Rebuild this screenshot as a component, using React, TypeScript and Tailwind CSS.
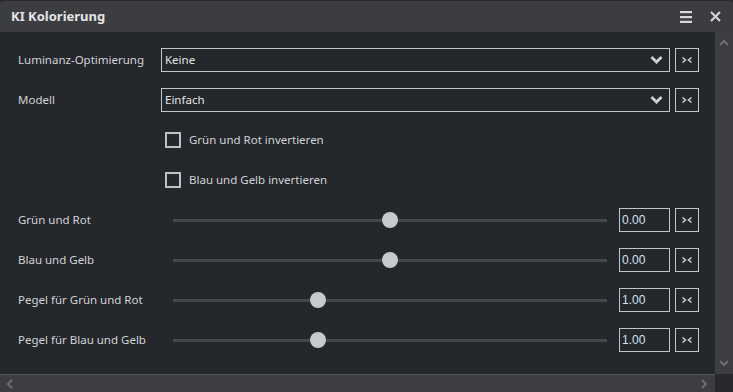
import { useState } from "react";

const font = { fontFamily: '"Noto Sans", "Open Sans", sans-serif' };

function ResetButton() {
  return (
    <button className="flex h-6 w-6 shrink-0 items-center justify-center border border-[#c3c4c6] bg-transparent">
      <svg width="12" height="8" viewBox="0 0 12 8" fill="none" stroke="#c8c9cb" strokeWidth="1.6">
        <path d="M1.5 1.5 L4.5 4 L1.5 6.5" />
        <path d="M10.5 1.5 L7.5 4 L10.5 6.5" />
      </svg>
    </button>
  );
}

function Row({ label, children }: { label: string; children: React.ReactNode }) {
  return (
    <div className="flex h-10 items-center">
      <div className="w-[143px] shrink-0 text-[11.5px] text-[#d2d3d5]">{label}</div>
      <div className="flex flex-1 items-center">{children}</div>
    </div>
  );
}

function Select({ value }: { value: string }) {
  return (
    <>
      <div className="flex h-6 flex-1 items-center justify-between border border-[#c3c4c6] pl-[3px] pr-[6px] text-[11.5px] text-[#e2e3e5]">
        <span>{value}</span>
        <svg width="13" height="9" viewBox="0 0 13 9" fill="#d0d1d3">
          <path d="M0.5 2 L2.5 0 L6.5 4 L10.5 0 L12.5 2 L6.5 8 Z" />
        </svg>
      </div>
      <div className="w-[5px]" />
      <ResetButton />
    </>
  );
}

function Check({ label }: { label: string }) {
  const [on, setOn] = useState(false);
  return (
    <div className="flex items-center pl-1" onClick={() => setOn(!on)}>
      <div className="h-4 w-4 border-2 border-[#bfc0c2]" />
      <span className="ml-2 text-[11.5px] text-[#d2d3d5]">{label}</span>
    </div>
  );
}

function Slider({ value, pos }: { value: string; pos: number }) {
  return (
    <>
      <div className="relative ml-3 mr-3 h-4 flex-1">
        <div className="absolute left-0 right-0 top-[7px] h-[3px] bg-[#45474b]" />
        <div
          className="absolute top-0 h-4 w-4 -translate-x-1/2 rounded-full bg-[#c8c9cc]"
          style={{ left: `${pos}%` }}
        />
      </div>
      <div
        className="flex h-6 w-[51px] shrink-0 items-center border border-[#c3c4c6] pl-[2px] text-[12px] text-[#d6e0ea]"
        style={{ fontFamily: '"Liberation Sans", Arial, sans-serif' }}
      >
        {value}
      </div>
      <div className="w-[5px]" />
      <ResetButton />
    </>
  );
}

export default function App() {
  return (
    <div className="flex h-[392px] w-[733px] flex-col overflow-hidden bg-[#24272c]" style={font}>
      <div className="flex h-8 shrink-0 items-center justify-between rounded-t-[3px] border-t border-[#2a2b2e] bg-[#3c3d41] pl-[11px] pr-[12px]">
        <span className="text-[13px] font-bold text-[#e4e4e6]">KI Kolorierung</span>
        <div className="flex items-center gap-[18px]">
          <svg width="12" height="12" viewBox="0 0 12 12" fill="#d8d8da">
            <rect x="0" y="0" width="12" height="2.2" />
            <rect x="0" y="5" width="12" height="2.2" />
            <rect x="0" y="9.8" width="12" height="2.2" />
          </svg>
          <svg width="11" height="11" viewBox="0 0 11 11" stroke="#d8d8da" strokeWidth="2">
            <path d="M1 1 L10 10 M10 1 L1 10" />
          </svg>
        </div>
      </div>

      <div className="flex min-h-0 flex-1">
        <div className="flex-1 pl-[18px] pr-4 pt-2">
          <Row label="Luminanz-Optimierung">
            <Select value="Keine" />
          </Row>
          <Row label="Modell">
            <Select value="Einfach" />
          </Row>
          <Row label="">
            <Check label="Grün und Rot invertieren" />
          </Row>
          <Row label="">
            <Check label="Blau und Gelb invertieren" />
          </Row>
          <Row label="Grün und Rot">
            <Slider value="0.00" pos={50} />
          </Row>
          <Row label="Blau und Gelb">
            <Slider value="0.00" pos={50} />
          </Row>
          <Row label="Pegel für Grün und Rot">
            <Slider value="1.00" pos={33.4} />
          </Row>
          <Row label="Pegel für Blau und Gelb">
            <Slider value="1.00" pos={33.4} />
          </Row>
        </div>
        <div className="flex w-[18px] shrink-0 flex-col items-center justify-between bg-[#3d3e42] py-[7px]">
          <svg width="10" height="7" viewBox="0 0 10 7" fill="none" stroke="#6e6f73" strokeWidth="2">
            <path d="M1 6 L5 2 L9 6" />
          </svg>
          <svg width="10" height="7" viewBox="0 0 10 7" fill="none" stroke="#6e6f73" strokeWidth="2">
            <path d="M1 1 L5 5 L9 1" />
          </svg>
        </div>
      </div>

      <div className="flex h-[18px] shrink-0">
        <div className="flex flex-1 items-center justify-between border-t border-[#55565a] bg-[#3d3e42] pl-[6px] pr-[7px]">
          <svg width="7" height="10" viewBox="0 0 7 10" fill="none" stroke="#6e6f73" strokeWidth="2">
            <path d="M6 1 L2 5 L6 9" />
          </svg>
          <svg width="7" height="10" viewBox="0 0 7 10" fill="none" stroke="#6e6f73" strokeWidth="2">
            <path d="M1 1 L5 5 L1 9" />
          </svg>
        </div>
        <div className="w-[18px] bg-[#27292d]" />
      </div>
    </div>
  );
}
